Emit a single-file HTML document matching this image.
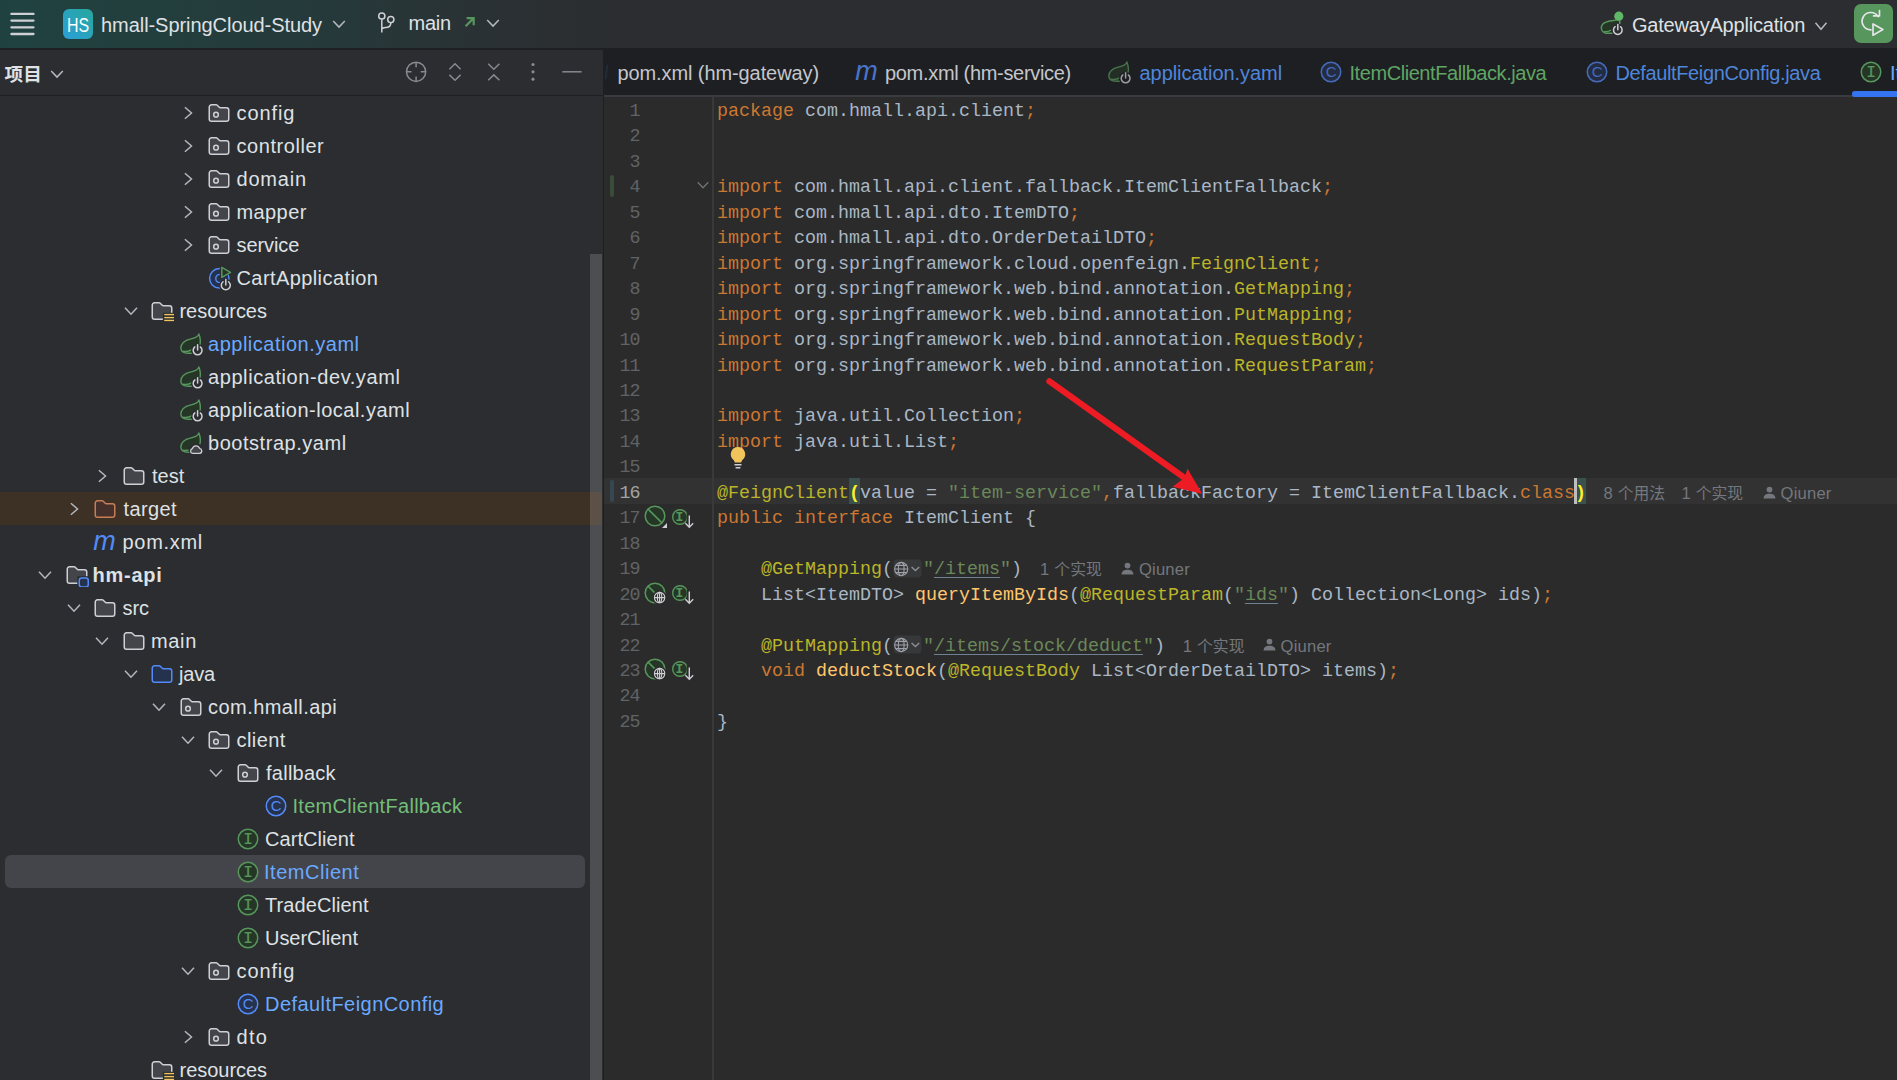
<!DOCTYPE html>
<html lang="zh-CN"><head><meta charset="utf-8"><title>hmall-SpringCloud-Study – ItemClient.java</title>
<style>
html,body{margin:0;padding:0;background:#2B2B2B;}
body{width:1897px;height:1080px;position:relative;overflow:hidden;font-family:"Liberation Sans","Noto Sans CJK SC",sans-serif;}
.tl{position:absolute;white-space:pre;font-size:20px;line-height:33px;height:33px;}
.ui{position:absolute;white-space:pre;font-size:20px;line-height:33px;color:#DFE1E5;}
.ln{position:absolute;left:604px;width:35.8px;text-align:right;font:18.33px/25.46px "Liberation Mono",monospace;white-space:pre;letter-spacing:-0.8px;}
.cl{position:absolute;left:717px;font:18.33px/25.46px "Liberation Mono",monospace;color:#A9B7C6;white-space:pre;height:25.46px;}
.k{color:#CC7832} .a{color:#BBB529} .s{color:#6A8759} .f{color:#FFC66D}
.u{text-decoration:underline;text-decoration-color:#6F8294;text-decoration-thickness:1.3px;text-underline-offset:3px}
.br{color:#FFEF28;font-weight:bold}
.gi{display:inline-block;position:relative;width:30px;height:1px;vertical-align:baseline;line-height:0}
.h{position:absolute;top:0.1px;font:16.6px/25.46px "Liberation Sans","Noto Sans CJK SC",sans-serif;color:#74777D;letter-spacing:0.2px;white-space:pre}
.cj{font-size:15.8px;letter-spacing:0}
.hi{position:absolute;top:4.8px}
</style></head>
<body>
<div style="position:absolute;left:0;top:0;width:1897px;height:47.5px;background:linear-gradient(90deg,#1F4240 0px,#223F3E 130px,#26393A 330px,#2A3134 480px,#2B2D30 620px)"></div>
<div style="position:absolute;left:0;top:47.5px;width:1897px;height:2.2px;background:#1E1F22"></div>
<svg style="position:absolute;left:8px;top:8px" width="30" height="32" viewBox="8 8 30 32" fill="none" stroke="#CED0D6" stroke-width="2.3" stroke-linecap="round"><path d="M11.4 13.9H33.5M11.4 20.6H33.5M11.4 27.3H33.5M11.4 34H33.5"/></svg>
<div style="position:absolute;left:63px;top:9px;width:30px;height:30px;border-radius:6px;background:linear-gradient(45deg,#2B9FD9,#27A79C)"></div>
<span style="position:absolute;left:63px;top:9.9px;width:30px;height:30px;line-height:30px;text-align:center;color:#fff;font:21px/30px 'Liberation Sans',sans-serif;transform:scaleX(0.76);transform-origin:50% 50%">HS</span>
<span class="ui" style="left:101.00px;top:9.3px;letter-spacing:-0.055px;">hmall-SpringCloud-Study</span>
<svg style="position:absolute;left:329px;top:14.3px" width="20" height="20" viewBox="-10 -10 20 20" fill="none"><path d="M-5.8 -3.1L0 3.1L5.8 -3.1" stroke="#B4B8BF" stroke-width="1.5"/></svg>
<svg style="position:absolute;left:372px;top:8px" width="28" height="30" viewBox="372 8 28 30" fill="none" stroke="#CED0D6" stroke-width="1.5"><circle cx="381.8" cy="16" r="3.1"/><circle cx="390.8" cy="19.6" r="3.1"/><path d="M381.8 19.2V32.6M390.8 22.8C390.8 26.4 388.5 27.6 385.6 27.6C383.3 27.6 381.8 28.4 381.8 30"/></svg>
<span class="ui" style="left:408.50px;top:7.4px;letter-spacing:-0.267px;">main</span>
<svg style="position:absolute;left:462px;top:14px" width="16" height="16" viewBox="462 14 16 16" fill="none" stroke="#57965C" stroke-width="2.2"><path d="M465.6 26.2L473.4 18.4M466.6 18.2H473.7V25.3"/></svg>
<svg style="position:absolute;left:483.4px;top:12.600000000000001px" width="20" height="20" viewBox="-10 -10 20 20" fill="none"><path d="M-5.8 -3.1L0 3.1L5.8 -3.1" stroke="#B4B8BF" stroke-width="1.5"/></svg>
<svg style="position:absolute;left:1598px;top:8px" width="30" height="32" viewBox="1598 8 30 32" fill="none"><path d="M1619.5 19.2C1616 21.2 1607 19.5 1602.6 24.2C1600 27.5 1601.4 32.4 1606 33.2H1612C1617 32 1621 26 1619.5 19.2Z" fill="#253627" stroke="#57965C" stroke-width="1.4"/><path d="M1603.6 31.6C1606 32 1609 31.4 1611 30" stroke="#57965C" stroke-width="1.4"/><g transform="translate(1599.2 11.7)"><circle cx="18.6" cy="18.4" r="6.4" fill="#2B2D30"/><path d="M21.25 15.01A4.3 4.3 0 1 1 15.95 15.01" stroke="#CED0D6" stroke-width="1.5" stroke-linecap="round"/><path d="M18.6 12.799999999999997V18.099999999999998" stroke="#CED0D6" stroke-width="1.5" stroke-linecap="round"/></g><circle cx="1618.8" cy="16.2" r="4.6" fill="#5FB865"/></svg>
<span class="ui" style="left:1632.00px;top:8.7px;letter-spacing:-0.206px;">GatewayApplication</span>
<svg style="position:absolute;left:1811.2px;top:15.5px" width="20" height="20" viewBox="-10 -10 20 20" fill="none"><path d="M-5.5 -3.3L0 3.3L5.5 -3.3" stroke="#B4B8BF" stroke-width="1.5"/></svg>
<div style="position:absolute;left:1854px;top:4.2px;width:39px;height:39px;border-radius:7px;background:#57965C"></div>
<svg style="position:absolute;left:1854px;top:4.2px" width="39" height="39" viewBox="0 0 39 39" fill="none" stroke="#E4E6EA" stroke-width="1.7" stroke-linecap="round" stroke-linejoin="round"><path d="M16.9 25.9A8.7 8.7 0 1 1 24.2 12.6"/><path d="M19.6 11.9H25.5V6.6"/><path d="M19 20V31.2L28.9 25.6Z"/></svg>
<div style="position:absolute;left:0;top:49.7px;width:603.2px;height:1031px;background:#2B2D30"></div>
<div style="position:absolute;left:0;top:95px;width:603px;height:1.2px;background:#1E1F22"></div>
<div style="position:absolute;left:603.1px;top:49.7px;width:1.1px;height:1031px;background:#1E1F22"></div>
<span style="position:absolute;left:4.6px;top:58.2px;font:bold 18.6px/33px 'Liberation Sans','Noto Sans CJK SC',sans-serif;color:#DFE1E5;white-space:pre">项目</span>
<svg style="position:absolute;left:47px;top:63.599999999999994px" width="20" height="20" viewBox="-10 -10 20 20" fill="none"><path d="M-5.8 -3.1L0 3.1L5.8 -3.1" stroke="#B4B8BF" stroke-width="1.5"/></svg>
<svg style="position:absolute;left:400px;top:56px" width="190" height="32" viewBox="400 56 190 32" fill="none" stroke="#868A91" stroke-width="1.5"><circle cx="416.1" cy="71.8" r="9.6"/><path d="M416.1 62.2V67.2M416.1 76.4V81.4M406.5 71.8H411.5M420.7 71.8H425.7"/><path d="M449.4 69.2L455 63.8L460.6 69.2M449.4 74.9L455 80.3L460.6 74.9"/><path d="M488.2 63.8L493.8 69.2L499.4 63.8M488.2 80.3L493.8 74.9L499.4 80.3"/><path d="M562.3 71.8H581.6"/><g fill="#868A91" stroke="none"><circle cx="533" cy="64.5" r="1.6"/><circle cx="533" cy="71.8" r="1.6"/><circle cx="533" cy="79.2" r="1.6"/></g></svg>
<svg style="position:absolute;left:179.5px;top:105.0px" width="16" height="16" viewBox="0 0 16 16" fill="none"><path d="M4.9 2.3L11.5 8L4.9 13.7" stroke="#B4B8BF" stroke-width="1.5" stroke-linejoin="miter"/></svg>
<svg style="position:absolute;left:207.0px;top:100.8px;" width="24" height="24" viewBox="0 0 16 16" fill="none"><path d="M1.5 4A1.5 1.5 0 0 1 3 2.5H6.1a1 1 0 0 1 .7.3L8.35 4.35a.5.5 0 0 0 .36.15H13A1.5 1.5 0 0 1 14.5 6v6A1.5 1.5 0 0 1 13 13.5H3A1.5 1.5 0 0 1 1.5 12Z" fill="#43454A" stroke="#CED0D6"/><circle cx="6" cy="9.1" r="1.55" stroke="#CED0D6"/></svg>
<span class="tl" style="left:236.50px;top:97px;letter-spacing:0.920px;color:#DFE1E5;font-weight:normal">config</span>
<svg style="position:absolute;left:179.5px;top:138.0px" width="16" height="16" viewBox="0 0 16 16" fill="none"><path d="M4.9 2.3L11.5 8L4.9 13.7" stroke="#B4B8BF" stroke-width="1.5" stroke-linejoin="miter"/></svg>
<svg style="position:absolute;left:207.0px;top:133.8px;" width="24" height="24" viewBox="0 0 16 16" fill="none"><path d="M1.5 4A1.5 1.5 0 0 1 3 2.5H6.1a1 1 0 0 1 .7.3L8.35 4.35a.5.5 0 0 0 .36.15H13A1.5 1.5 0 0 1 14.5 6v6A1.5 1.5 0 0 1 13 13.5H3A1.5 1.5 0 0 1 1.5 12Z" fill="#43454A" stroke="#CED0D6"/><circle cx="6" cy="9.1" r="1.55" stroke="#CED0D6"/></svg>
<span class="tl" style="left:236.50px;top:130px;letter-spacing:0.556px;color:#DFE1E5;font-weight:normal">controller</span>
<svg style="position:absolute;left:179.5px;top:171.0px" width="16" height="16" viewBox="0 0 16 16" fill="none"><path d="M4.9 2.3L11.5 8L4.9 13.7" stroke="#B4B8BF" stroke-width="1.5" stroke-linejoin="miter"/></svg>
<svg style="position:absolute;left:207.0px;top:166.8px;" width="24" height="24" viewBox="0 0 16 16" fill="none"><path d="M1.5 4A1.5 1.5 0 0 1 3 2.5H6.1a1 1 0 0 1 .7.3L8.35 4.35a.5.5 0 0 0 .36.15H13A1.5 1.5 0 0 1 14.5 6v6A1.5 1.5 0 0 1 13 13.5H3A1.5 1.5 0 0 1 1.5 12Z" fill="#43454A" stroke="#CED0D6"/><circle cx="6" cy="9.1" r="1.55" stroke="#CED0D6"/></svg>
<span class="tl" style="left:236.50px;top:163px;letter-spacing:0.800px;color:#DFE1E5;font-weight:normal">domain</span>
<svg style="position:absolute;left:179.5px;top:204.0px" width="16" height="16" viewBox="0 0 16 16" fill="none"><path d="M4.9 2.3L11.5 8L4.9 13.7" stroke="#B4B8BF" stroke-width="1.5" stroke-linejoin="miter"/></svg>
<svg style="position:absolute;left:207.0px;top:199.8px;" width="24" height="24" viewBox="0 0 16 16" fill="none"><path d="M1.5 4A1.5 1.5 0 0 1 3 2.5H6.1a1 1 0 0 1 .7.3L8.35 4.35a.5.5 0 0 0 .36.15H13A1.5 1.5 0 0 1 14.5 6v6A1.5 1.5 0 0 1 13 13.5H3A1.5 1.5 0 0 1 1.5 12Z" fill="#43454A" stroke="#CED0D6"/><circle cx="6" cy="9.1" r="1.55" stroke="#CED0D6"/></svg>
<span class="tl" style="left:236.50px;top:196px;letter-spacing:0.400px;color:#DFE1E5;font-weight:normal">mapper</span>
<svg style="position:absolute;left:179.5px;top:237.0px" width="16" height="16" viewBox="0 0 16 16" fill="none"><path d="M4.9 2.3L11.5 8L4.9 13.7" stroke="#B4B8BF" stroke-width="1.5" stroke-linejoin="miter"/></svg>
<svg style="position:absolute;left:207.0px;top:232.8px;" width="24" height="24" viewBox="0 0 16 16" fill="none"><path d="M1.5 4A1.5 1.5 0 0 1 3 2.5H6.1a1 1 0 0 1 .7.3L8.35 4.35a.5.5 0 0 0 .36.15H13A1.5 1.5 0 0 1 14.5 6v6A1.5 1.5 0 0 1 13 13.5H3A1.5 1.5 0 0 1 1.5 12Z" fill="#43454A" stroke="#CED0D6"/><circle cx="6" cy="9.1" r="1.55" stroke="#CED0D6"/></svg>
<span class="tl" style="left:236.50px;top:229px;letter-spacing:-0.100px;color:#DFE1E5;font-weight:normal">service</span>
<svg style="position:absolute;left:207.0px;top:265.8px;overflow:visible;" width="24" height="24" viewBox="0 0 24 24" fill="none"><circle cx="12.3" cy="12.3" r="9.7" fill="#25324D" stroke="#548AF7" stroke-width="1.5"/><text x="12.3" y="17" font-family="Liberation Sans, sans-serif" font-size="13.5" text-anchor="middle" fill="#548AF7">C</text><path d="M12.8 -2V13.5L26 6.3Z" fill="#2B2D30"/><path d="M14.8 1.4V11.4L23.5 6.4Z" fill="#253627" stroke="#57965C" stroke-width="1.5" stroke-linejoin="round"/><circle cx="18.8" cy="19.3" r="6.6" fill="#2B2D30"/><path d="M21.57 15.75A4.5 4.5 0 1 1 16.03 15.75" stroke="#CED0D6" stroke-width="1.5" stroke-linecap="round"/><path d="M18.8 13.5V19.0" stroke="#CED0D6" stroke-width="1.5" stroke-linecap="round"/></svg>
<span class="tl" style="left:236.50px;top:262px;letter-spacing:0.414px;color:#DFE1E5;font-weight:normal">CartApplication</span>
<svg style="position:absolute;left:120.5px;top:301.1px" width="20" height="20" viewBox="-10 -10 20 20" fill="none"><path d="M-6.0 -3.15L0 3.15L6.0 -3.15" stroke="#B4B8BF" stroke-width="1.5"/></svg>
<svg style="position:absolute;left:150.0px;top:298.8px;" width="24" height="24" viewBox="0 0 16 16" fill="none"><path d="M1.5 4A1.5 1.5 0 0 1 3 2.5H6.1a1 1 0 0 1 .7.3L8.35 4.35a.5.5 0 0 0 .36.15H13A1.5 1.5 0 0 1 14.5 6v6A1.5 1.5 0 0 1 13 13.5H3A1.5 1.5 0 0 1 1.5 12Z" fill="#43454A" stroke="#CED0D6"/><rect x="8.6" y="9.2" width="8" height="7" fill="#2B2D30"/><path d="M9.5 10.4H16.2" stroke="#F2C55C" stroke-width="0.9"/><path d="M9.5 12.4H16.2" stroke="#F2C55C" stroke-width="0.9"/><path d="M9.5 14.3H16.2" stroke="#F2C55C" stroke-width="0.9"/></svg>
<span class="tl" style="left:179.50px;top:295px;letter-spacing:-0.050px;color:#DFE1E5;font-weight:normal">resources</span>
<svg style="position:absolute;left:178.5px;top:331.8px;" width="24" height="24" viewBox="0 0 24 24" fill="none"><g opacity="1"><path d="M19.9 1.9C19.4 4.8 16.4 6 11.2 7.1C5.6 8.3 1.5 11.9 1.8 16.3C2.1 19.6 5 21.2 9.2 21.2H14.5C20.2 19.2 23.4 11 19.9 1.9Z" fill="#253627" stroke="#57965C" stroke-width="1.4" stroke-linejoin="round"/><path d="M4.6 19.3C7.5 19.8 10.5 19.2 13 17.6" stroke="#57965C" stroke-width="1.4" stroke-linecap="round"/><circle cx="18.6" cy="18.4" r="6.5" fill="#2B2D30"/><path d="M21.31 14.93A4.4 4.4 0 1 1 15.89 14.93" stroke="#CED0D6" stroke-width="1.5" stroke-linecap="round"/><path d="M18.6 12.699999999999998V18.099999999999998" stroke="#CED0D6" stroke-width="1.5" stroke-linecap="round"/></g></svg>
<span class="tl" style="left:208.00px;top:328px;letter-spacing:0.507px;color:#6AA9FF;font-weight:normal">application.yaml</span>
<svg style="position:absolute;left:178.5px;top:364.8px;" width="24" height="24" viewBox="0 0 24 24" fill="none"><g opacity="1"><path d="M19.9 1.9C19.4 4.8 16.4 6 11.2 7.1C5.6 8.3 1.5 11.9 1.8 16.3C2.1 19.6 5 21.2 9.2 21.2H14.5C20.2 19.2 23.4 11 19.9 1.9Z" fill="#253627" stroke="#57965C" stroke-width="1.4" stroke-linejoin="round"/><path d="M4.6 19.3C7.5 19.8 10.5 19.2 13 17.6" stroke="#57965C" stroke-width="1.4" stroke-linecap="round"/><circle cx="18.6" cy="18.4" r="6.5" fill="#2B2D30"/><path d="M21.31 14.93A4.4 4.4 0 1 1 15.89 14.93" stroke="#CED0D6" stroke-width="1.5" stroke-linecap="round"/><path d="M18.6 12.699999999999998V18.099999999999998" stroke="#CED0D6" stroke-width="1.5" stroke-linecap="round"/></g></svg>
<span class="tl" style="left:208.00px;top:361px;letter-spacing:0.579px;color:#DFE1E5;font-weight:normal">application-dev.yaml</span>
<svg style="position:absolute;left:178.5px;top:397.8px;" width="24" height="24" viewBox="0 0 24 24" fill="none"><g opacity="1"><path d="M19.9 1.9C19.4 4.8 16.4 6 11.2 7.1C5.6 8.3 1.5 11.9 1.8 16.3C2.1 19.6 5 21.2 9.2 21.2H14.5C20.2 19.2 23.4 11 19.9 1.9Z" fill="#253627" stroke="#57965C" stroke-width="1.4" stroke-linejoin="round"/><path d="M4.6 19.3C7.5 19.8 10.5 19.2 13 17.6" stroke="#57965C" stroke-width="1.4" stroke-linecap="round"/><circle cx="18.6" cy="18.4" r="6.5" fill="#2B2D30"/><path d="M21.31 14.93A4.4 4.4 0 1 1 15.89 14.93" stroke="#CED0D6" stroke-width="1.5" stroke-linecap="round"/><path d="M18.6 12.699999999999998V18.099999999999998" stroke="#CED0D6" stroke-width="1.5" stroke-linecap="round"/></g></svg>
<span class="tl" style="left:208.00px;top:394px;letter-spacing:0.495px;color:#DFE1E5;font-weight:normal">application-local.yaml</span>
<svg style="position:absolute;left:178.5px;top:430.8px;" width="24" height="24" viewBox="0 0 24 24" fill="none"><g opacity="1"><path d="M19.9 1.9C19.4 4.8 16.4 6 11.2 7.1C5.6 8.3 1.5 11.9 1.8 16.3C2.1 19.6 5 21.2 9.2 21.2H14.5C20.2 19.2 23.4 11 19.9 1.9Z" fill="#253627" stroke="#57965C" stroke-width="1.4" stroke-linejoin="round"/><path d="M4.6 19.3C7.5 19.8 10.5 19.2 13 17.6" stroke="#57965C" stroke-width="1.4" stroke-linecap="round"/><ellipse cx="17.5" cy="18.6" rx="8.2" ry="6" fill="#2B2D30"/><path d="M13.7 22.4a2.4 2.4 0 0 1-.3-4.7a3.7 3.7 0 0 1 7.1-.4a2.6 2.6 0 0 1 .3 5.1Z" fill="#43454A" stroke="#CED0D6" stroke-width="1.3" stroke-linejoin="round"/></g></svg>
<span class="tl" style="left:208.00px;top:427px;letter-spacing:0.538px;color:#DFE1E5;font-weight:normal">bootstrap.yaml</span>
<svg style="position:absolute;left:94.0px;top:468.0px" width="16" height="16" viewBox="0 0 16 16" fill="none"><path d="M4.9 2.3L11.5 8L4.9 13.7" stroke="#B4B8BF" stroke-width="1.5" stroke-linejoin="miter"/></svg>
<svg style="position:absolute;left:121.5px;top:463.8px;" width="24" height="24" viewBox="0 0 16 16" fill="none"><path d="M1.5 4A1.5 1.5 0 0 1 3 2.5H6.1a1 1 0 0 1 .7.3L8.35 4.35a.5.5 0 0 0 .36.15H13A1.5 1.5 0 0 1 14.5 6v6A1.5 1.5 0 0 1 13 13.5H3A1.5 1.5 0 0 1 1.5 12Z" fill="#43454A" stroke="#CED0D6"/></svg>
<span class="tl" style="left:152.00px;top:460px;letter-spacing:0.000px;color:#DFE1E5;font-weight:normal">test</span>
<div style="position:absolute;left:0;top:492px;width:602px;height:33px;background:#3D3024"></div>
<svg style="position:absolute;left:65.5px;top:501.0px" width="16" height="16" viewBox="0 0 16 16" fill="none"><path d="M4.9 2.3L11.5 8L4.9 13.7" stroke="#B4B8BF" stroke-width="1.5" stroke-linejoin="miter"/></svg>
<svg style="position:absolute;left:93.0px;top:496.8px;" width="24" height="24" viewBox="0 0 16 16" fill="none"><path d="M1.5 4A1.5 1.5 0 0 1 3 2.5H6.1a1 1 0 0 1 .7.3L8.35 4.35a.5.5 0 0 0 .36.15H13A1.5 1.5 0 0 1 14.5 6v6A1.5 1.5 0 0 1 13 13.5H3A1.5 1.5 0 0 1 1.5 12Z" fill="#45302B" stroke="#C77D55"/></svg>
<span class="tl" style="left:123.50px;top:493px;letter-spacing:0.400px;color:#DFE1E5;font-weight:normal">target</span>
<svg style="position:absolute;left:93.2px;top:530.6px;overflow:visible;" width="24" height="24" viewBox="0 0 24 24" fill="none"><text x="11.6" y="19.2" font-family="Liberation Sans, sans-serif" font-style="italic" font-size="27" text-anchor="middle" fill="#548AF7" opacity="1">m</text></svg>
<span class="tl" style="left:122.50px;top:526px;letter-spacing:0.700px;color:#DFE1E5;font-weight:normal">pom.xml</span>
<svg style="position:absolute;left:35.0px;top:565.1px" width="20" height="20" viewBox="-10 -10 20 20" fill="none"><path d="M-6.0 -3.15L0 3.15L6.0 -3.15" stroke="#B4B8BF" stroke-width="1.5"/></svg>
<svg style="position:absolute;left:64.5px;top:562.8px;" width="24" height="24" viewBox="0 0 16 16" fill="none"><path d="M1.5 4A1.5 1.5 0 0 1 3 2.5H6.1a1 1 0 0 1 .7.3L8.35 4.35a.5.5 0 0 0 .36.15H13A1.5 1.5 0 0 1 14.5 6v6A1.5 1.5 0 0 1 13 13.5H3A1.5 1.5 0 0 1 1.5 12Z" fill="#43454A" stroke="#CED0D6"/><rect x="8.2" y="8.8" width="8" height="8" fill="#2B2D30"/><rect x="9.5" y="10" width="6" height="6" rx="1.6" fill="#25324D" stroke="#548AF7"/></svg>
<span class="tl" style="left:92.50px;top:559px;letter-spacing:0.760px;color:#DFE1E5;font-weight:bold">hm-api</span>
<svg style="position:absolute;left:63.5px;top:598.1px" width="20" height="20" viewBox="-10 -10 20 20" fill="none"><path d="M-6.0 -3.15L0 3.15L6.0 -3.15" stroke="#B4B8BF" stroke-width="1.5"/></svg>
<svg style="position:absolute;left:93.0px;top:595.8px;" width="24" height="24" viewBox="0 0 16 16" fill="none"><path d="M1.5 4A1.5 1.5 0 0 1 3 2.5H6.1a1 1 0 0 1 .7.3L8.35 4.35a.5.5 0 0 0 .36.15H13A1.5 1.5 0 0 1 14.5 6v6A1.5 1.5 0 0 1 13 13.5H3A1.5 1.5 0 0 1 1.5 12Z" fill="#43454A" stroke="#CED0D6"/></svg>
<span class="tl" style="left:122.50px;top:592px;letter-spacing:-0.100px;color:#DFE1E5;font-weight:normal">src</span>
<svg style="position:absolute;left:92.0px;top:631.1px" width="20" height="20" viewBox="-10 -10 20 20" fill="none"><path d="M-6.0 -3.15L0 3.15L6.0 -3.15" stroke="#B4B8BF" stroke-width="1.5"/></svg>
<svg style="position:absolute;left:121.5px;top:628.8px;" width="24" height="24" viewBox="0 0 16 16" fill="none"><path d="M1.5 4A1.5 1.5 0 0 1 3 2.5H6.1a1 1 0 0 1 .7.3L8.35 4.35a.5.5 0 0 0 .36.15H13A1.5 1.5 0 0 1 14.5 6v6A1.5 1.5 0 0 1 13 13.5H3A1.5 1.5 0 0 1 1.5 12Z" fill="#43454A" stroke="#CED0D6"/></svg>
<span class="tl" style="left:151.00px;top:625px;letter-spacing:0.667px;color:#DFE1E5;font-weight:normal">main</span>
<svg style="position:absolute;left:120.5px;top:664.1px" width="20" height="20" viewBox="-10 -10 20 20" fill="none"><path d="M-6.0 -3.15L0 3.15L6.0 -3.15" stroke="#B4B8BF" stroke-width="1.5"/></svg>
<svg style="position:absolute;left:150.0px;top:661.8px;" width="24" height="24" viewBox="0 0 16 16" fill="none"><path d="M1.5 4A1.5 1.5 0 0 1 3 2.5H6.1a1 1 0 0 1 .7.3L8.35 4.35a.5.5 0 0 0 .36.15H13A1.5 1.5 0 0 1 14.5 6v6A1.5 1.5 0 0 1 13 13.5H3A1.5 1.5 0 0 1 1.5 12Z" fill="#25324D" stroke="#548AF7"/></svg>
<span class="tl" style="left:179.00px;top:658px;letter-spacing:-0.200px;color:#DFE1E5;font-weight:normal">java</span>
<svg style="position:absolute;left:149.0px;top:697.1px" width="20" height="20" viewBox="-10 -10 20 20" fill="none"><path d="M-6.0 -3.15L0 3.15L6.0 -3.15" stroke="#B4B8BF" stroke-width="1.5"/></svg>
<svg style="position:absolute;left:178.5px;top:694.8px;" width="24" height="24" viewBox="0 0 16 16" fill="none"><path d="M1.5 4A1.5 1.5 0 0 1 3 2.5H6.1a1 1 0 0 1 .7.3L8.35 4.35a.5.5 0 0 0 .36.15H13A1.5 1.5 0 0 1 14.5 6v6A1.5 1.5 0 0 1 13 13.5H3A1.5 1.5 0 0 1 1.5 12Z" fill="#43454A" stroke="#CED0D6"/><circle cx="6" cy="9.1" r="1.55" stroke="#CED0D6"/></svg>
<span class="tl" style="left:208.00px;top:691px;letter-spacing:0.450px;color:#DFE1E5;font-weight:normal">com.hmall.api</span>
<svg style="position:absolute;left:177.5px;top:730.1px" width="20" height="20" viewBox="-10 -10 20 20" fill="none"><path d="M-6.0 -3.15L0 3.15L6.0 -3.15" stroke="#B4B8BF" stroke-width="1.5"/></svg>
<svg style="position:absolute;left:207.0px;top:727.8px;" width="24" height="24" viewBox="0 0 16 16" fill="none"><path d="M1.5 4A1.5 1.5 0 0 1 3 2.5H6.1a1 1 0 0 1 .7.3L8.35 4.35a.5.5 0 0 0 .36.15H13A1.5 1.5 0 0 1 14.5 6v6A1.5 1.5 0 0 1 13 13.5H3A1.5 1.5 0 0 1 1.5 12Z" fill="#43454A" stroke="#CED0D6"/><circle cx="6" cy="9.1" r="1.55" stroke="#CED0D6"/></svg>
<span class="tl" style="left:236.50px;top:724px;letter-spacing:0.440px;color:#DFE1E5;font-weight:normal">client</span>
<svg style="position:absolute;left:206.0px;top:763.1px" width="20" height="20" viewBox="-10 -10 20 20" fill="none"><path d="M-6.0 -3.15L0 3.15L6.0 -3.15" stroke="#B4B8BF" stroke-width="1.5"/></svg>
<svg style="position:absolute;left:235.5px;top:760.8px;" width="24" height="24" viewBox="0 0 16 16" fill="none"><path d="M1.5 4A1.5 1.5 0 0 1 3 2.5H6.1a1 1 0 0 1 .7.3L8.35 4.35a.5.5 0 0 0 .36.15H13A1.5 1.5 0 0 1 14.5 6v6A1.5 1.5 0 0 1 13 13.5H3A1.5 1.5 0 0 1 1.5 12Z" fill="#43454A" stroke="#CED0D6"/><circle cx="6" cy="9.1" r="1.55" stroke="#CED0D6"/></svg>
<span class="tl" style="left:266.00px;top:757px;letter-spacing:0.257px;color:#DFE1E5;font-weight:normal">fallback</span>
<svg style="position:absolute;left:264.0px;top:793.8px;" width="24" height="24" viewBox="0 0 16 16" fill="none"><g opacity="1"><circle cx="8" cy="8" r="6.5" fill="#25324D" stroke="#548AF7"/><text x="8.05" y="11.55" font-family="Liberation Sans, sans-serif" font-size="10" text-anchor="middle" fill="#548AF7">C</text></g></svg>
<span class="tl" style="left:292.50px;top:790px;letter-spacing:0.294px;color:#73BD79;font-weight:normal">ItemClientFallback</span>
<svg style="position:absolute;left:235.5px;top:826.8px;" width="24" height="24" viewBox="0 0 16 16" fill="none"><g opacity="1"><circle cx="8" cy="8" r="6.5" fill="#253627" stroke="#57965C"/><text x="8" y="11.45" font-family="Liberation Mono, monospace" font-size="10.8" text-anchor="middle" fill="#57965C" stroke="#57965C" stroke-width="0.15">I</text></g></svg>
<span class="tl" style="left:265.00px;top:823px;letter-spacing:0.067px;color:#DFE1E5;font-weight:normal">CartClient</span>
<div style="position:absolute;left:4.5px;top:854.8px;width:580.5px;height:33px;background:#43454A;border-radius:6px"></div>
<svg style="position:absolute;left:235.5px;top:859.8px;" width="24" height="24" viewBox="0 0 16 16" fill="none"><g opacity="1"><circle cx="8" cy="8" r="6.5" fill="#253627" stroke="#57965C"/><text x="8" y="11.45" font-family="Liberation Mono, monospace" font-size="10.8" text-anchor="middle" fill="#57965C" stroke="#57965C" stroke-width="0.15">I</text></g></svg>
<span class="tl" style="left:264.00px;top:856px;letter-spacing:0.533px;color:#6AA9FF;font-weight:normal">ItemClient</span>
<svg style="position:absolute;left:235.5px;top:892.8px;" width="24" height="24" viewBox="0 0 16 16" fill="none"><g opacity="1"><circle cx="8" cy="8" r="6.5" fill="#253627" stroke="#57965C"/><text x="8" y="11.45" font-family="Liberation Mono, monospace" font-size="10.8" text-anchor="middle" fill="#57965C" stroke="#57965C" stroke-width="0.15">I</text></g></svg>
<span class="tl" style="left:265.00px;top:889px;letter-spacing:0.080px;color:#DFE1E5;font-weight:normal">TradeClient</span>
<svg style="position:absolute;left:235.5px;top:925.8px;" width="24" height="24" viewBox="0 0 16 16" fill="none"><g opacity="1"><circle cx="8" cy="8" r="6.5" fill="#253627" stroke="#57965C"/><text x="8" y="11.45" font-family="Liberation Mono, monospace" font-size="10.8" text-anchor="middle" fill="#57965C" stroke="#57965C" stroke-width="0.15">I</text></g></svg>
<span class="tl" style="left:265.00px;top:922px;letter-spacing:-0.044px;color:#DFE1E5;font-weight:normal">UserClient</span>
<svg style="position:absolute;left:177.5px;top:961.1px" width="20" height="20" viewBox="-10 -10 20 20" fill="none"><path d="M-6.0 -3.15L0 3.15L6.0 -3.15" stroke="#B4B8BF" stroke-width="1.5"/></svg>
<svg style="position:absolute;left:207.0px;top:958.8px;" width="24" height="24" viewBox="0 0 16 16" fill="none"><path d="M1.5 4A1.5 1.5 0 0 1 3 2.5H6.1a1 1 0 0 1 .7.3L8.35 4.35a.5.5 0 0 0 .36.15H13A1.5 1.5 0 0 1 14.5 6v6A1.5 1.5 0 0 1 13 13.5H3A1.5 1.5 0 0 1 1.5 12Z" fill="#43454A" stroke="#CED0D6"/><circle cx="6" cy="9.1" r="1.55" stroke="#CED0D6"/></svg>
<span class="tl" style="left:236.50px;top:955px;letter-spacing:0.880px;color:#DFE1E5;font-weight:normal">config</span>
<svg style="position:absolute;left:235.5px;top:991.8px;" width="24" height="24" viewBox="0 0 16 16" fill="none"><g opacity="1"><circle cx="8" cy="8" r="6.5" fill="#25324D" stroke="#548AF7"/><text x="8.05" y="11.55" font-family="Liberation Sans, sans-serif" font-size="10" text-anchor="middle" fill="#548AF7">C</text></g></svg>
<span class="tl" style="left:265.00px;top:988px;letter-spacing:0.441px;color:#6AA9FF;font-weight:normal">DefaultFeignConfig</span>
<svg style="position:absolute;left:179.5px;top:1029.0px" width="16" height="16" viewBox="0 0 16 16" fill="none"><path d="M4.9 2.3L11.5 8L4.9 13.7" stroke="#B4B8BF" stroke-width="1.5" stroke-linejoin="miter"/></svg>
<svg style="position:absolute;left:207.0px;top:1024.8px;" width="24" height="24" viewBox="0 0 16 16" fill="none"><path d="M1.5 4A1.5 1.5 0 0 1 3 2.5H6.1a1 1 0 0 1 .7.3L8.35 4.35a.5.5 0 0 0 .36.15H13A1.5 1.5 0 0 1 14.5 6v6A1.5 1.5 0 0 1 13 13.5H3A1.5 1.5 0 0 1 1.5 12Z" fill="#43454A" stroke="#CED0D6"/><circle cx="6" cy="9.1" r="1.55" stroke="#CED0D6"/></svg>
<span class="tl" style="left:236.50px;top:1021px;letter-spacing:1.300px;color:#DFE1E5;font-weight:normal">dto</span>
<svg style="position:absolute;left:150.0px;top:1057.8px;" width="24" height="24" viewBox="0 0 16 16" fill="none"><path d="M1.5 4A1.5 1.5 0 0 1 3 2.5H6.1a1 1 0 0 1 .7.3L8.35 4.35a.5.5 0 0 0 .36.15H13A1.5 1.5 0 0 1 14.5 6v6A1.5 1.5 0 0 1 13 13.5H3A1.5 1.5 0 0 1 1.5 12Z" fill="#43454A" stroke="#CED0D6"/><rect x="8.6" y="9.2" width="8" height="7" fill="#2B2D30"/><path d="M9.5 10.4H16.2" stroke="#F2C55C" stroke-width="0.9"/><path d="M9.5 12.4H16.2" stroke="#F2C55C" stroke-width="0.9"/><path d="M9.5 14.3H16.2" stroke="#F2C55C" stroke-width="0.9"/></svg>
<span class="tl" style="left:179.50px;top:1054px;letter-spacing:-0.025px;color:#DFE1E5;font-weight:normal">resources</span>
<div style="position:absolute;left:604.2px;top:49.7px;width:1293px;height:45.5px;background:#1E1F22"></div>
<div style="position:absolute;left:604.2px;top:95px;width:1293px;height:2px;background:#393B40"></div>
<div style="position:absolute;left:1852.4px;top:91.2px;width:60px;height:5.6px;border-radius:2.8px;background:#3574F0"></div>
<svg style="position:absolute;left:603px;top:62px" width="8" height="20" viewBox="0 0 8 20" fill="none"><path d="M4.4 3.5L2.6 16.5" stroke="#232C3B" stroke-width="1.8" stroke-linecap="round"/></svg>
<span class="ui tab" style="left:617.50px;top:57.1px;letter-spacing:-0.095px;color:#C4C6CC">pom.xml (hm-gateway)</span>
<svg style="position:absolute;left:854.5px;top:61px;overflow:visible;" width="24" height="24" viewBox="0 0 24 24" fill="none"><text x="11.6" y="19.2" font-family="Liberation Sans, sans-serif" font-style="italic" font-size="27" text-anchor="middle" fill="#548AF7" opacity="0.8">m</text></svg>
<span class="ui tab" style="left:885.00px;top:57.1px;letter-spacing:-0.316px;color:#C4C6CC">pom.xml (hm-service)</span>
<svg style="position:absolute;left:1107.3px;top:59.6px;" width="24" height="24" viewBox="0 0 24 24" fill="none"><g opacity="0.72"><path d="M19.9 1.9C19.4 4.8 16.4 6 11.2 7.1C5.6 8.3 1.5 11.9 1.8 16.3C2.1 19.6 5 21.2 9.2 21.2H14.5C20.2 19.2 23.4 11 19.9 1.9Z" fill="#253627" stroke="#57965C" stroke-width="1.4" stroke-linejoin="round"/><path d="M4.6 19.3C7.5 19.8 10.5 19.2 13 17.6" stroke="#57965C" stroke-width="1.4" stroke-linecap="round"/><circle cx="18.6" cy="18.4" r="6.5" fill="#1E1F22"/><path d="M21.31 14.93A4.4 4.4 0 1 1 15.89 14.93" stroke="#CED0D6" stroke-width="1.5" stroke-linecap="round"/><path d="M18.6 12.699999999999998V18.099999999999998" stroke="#CED0D6" stroke-width="1.5" stroke-linecap="round"/></g></svg>
<span class="ui tab" style="left:1139.50px;top:57.1px;letter-spacing:-0.053px;color:#4E86DC">application.yaml</span>
<svg style="position:absolute;left:1319.3px;top:59.6px;" width="24" height="24" viewBox="0 0 16 16" fill="none"><g opacity="0.72"><circle cx="8" cy="8" r="6.5" fill="#25324D" stroke="#548AF7"/><text x="8.05" y="11.55" font-family="Liberation Sans, sans-serif" font-size="10" text-anchor="middle" fill="#548AF7">C</text></g></svg>
<span class="ui tab" style="left:1349.50px;top:57.1px;letter-spacing:-0.436px;color:#5FA564">ItemClientFallback.java</span>
<svg style="position:absolute;left:1584.5px;top:60px;" width="24" height="24" viewBox="0 0 16 16" fill="none"><g opacity="0.72"><circle cx="8" cy="8" r="6.5" fill="#25324D" stroke="#548AF7"/><text x="8.05" y="11.55" font-family="Liberation Sans, sans-serif" font-size="10" text-anchor="middle" fill="#548AF7">C</text></g></svg>
<span class="ui tab" style="left:1615.50px;top:57.1px;letter-spacing:-0.373px;color:#4E86DC">DefaultFeignConfig.java</span>
<svg style="position:absolute;left:1858.7px;top:60px;" width="24" height="24" viewBox="0 0 16 16" fill="none"><g opacity="1"><circle cx="8" cy="8" r="6.5" fill="#253627" stroke="#57965C"/><text x="8" y="11.45" font-family="Liberation Mono, monospace" font-size="10.8" text-anchor="middle" fill="#57965C" stroke="#57965C" stroke-width="0.15">I</text></g></svg>
<span class="ui tab" style="left:1890px;top:57.1px;color:#6AA9FF">ItemClient.java</span>
<div style="position:absolute;left:604px;top:478px;width:1293px;height:26px;background:#323232"></div>
<div style="position:absolute;left:712.1px;top:97px;width:1.9px;height:983px;background:#393939"></div>
<div style="position:absolute;left:849px;top:478px;width:11px;height:26px;background:#3B514D"></div>
<div style="position:absolute;left:1575px;top:478px;width:11px;height:26px;background:#3B514D"></div>
<span class="ln" style="top:98.90px;color:#606366">1</span>
<div class="cl" style="top:98.90px"><span class="k">package</span> com.hmall.api.client<span class="k">;</span></div>
<span class="ln" style="top:124.36px;color:#606366">2</span>
<span class="ln" style="top:149.82px;color:#606366">3</span>
<span class="ln" style="top:175.28px;color:#606366">4</span>
<div class="cl" style="top:175.28px"><span class="k">import</span> com.hmall.api.client.fallback.ItemClientFallback<span class="k">;</span></div>
<span class="ln" style="top:200.74px;color:#606366">5</span>
<div class="cl" style="top:200.74px"><span class="k">import</span> com.hmall.api.dto.ItemDTO<span class="k">;</span></div>
<span class="ln" style="top:226.20px;color:#606366">6</span>
<div class="cl" style="top:226.20px"><span class="k">import</span> com.hmall.api.dto.OrderDetailDTO<span class="k">;</span></div>
<span class="ln" style="top:251.66px;color:#606366">7</span>
<div class="cl" style="top:251.66px"><span class="k">import</span> org.springframework.cloud.openfeign.<span class="a">FeignClient</span><span class="k">;</span></div>
<span class="ln" style="top:277.12px;color:#606366">8</span>
<div class="cl" style="top:277.12px"><span class="k">import</span> org.springframework.web.bind.annotation.<span class="a">GetMapping</span><span class="k">;</span></div>
<span class="ln" style="top:302.58px;color:#606366">9</span>
<div class="cl" style="top:302.58px"><span class="k">import</span> org.springframework.web.bind.annotation.<span class="a">PutMapping</span><span class="k">;</span></div>
<span class="ln" style="top:328.04px;color:#606366">10</span>
<div class="cl" style="top:328.04px"><span class="k">import</span> org.springframework.web.bind.annotation.<span class="a">RequestBody</span><span class="k">;</span></div>
<span class="ln" style="top:353.50px;color:#606366">11</span>
<div class="cl" style="top:353.50px"><span class="k">import</span> org.springframework.web.bind.annotation.<span class="a">RequestParam</span><span class="k">;</span></div>
<span class="ln" style="top:378.96px;color:#606366">12</span>
<span class="ln" style="top:404.42px;color:#606366">13</span>
<div class="cl" style="top:404.42px"><span class="k">import</span> java.util.Collection<span class="k">;</span></div>
<span class="ln" style="top:429.88px;color:#606366">14</span>
<div class="cl" style="top:429.88px"><span class="k">import</span> java.util.List<span class="k">;</span></div>
<span class="ln" style="top:455.34px;color:#606366">15</span>
<span class="ln" style="top:480.80px;color:#A4A3A3">16</span>
<div class="cl" style="top:480.80px"><span class="a">@FeignClient</span><span class="br">(</span>value = <span class="s">"item-service"</span><span class="k">,</span>fallbackFactory = ItemClientFallback.<span class="k">class</span><span class="br">)</span><span class="h" style="left:886.4px">8 <span class="cj">个用法</span></span><span class="h" style="left:964.4px">1 <span class="cj">个实现</span></span><svg class="hi" style="left:1045.6px" width="13" height="13" viewBox="0 0 13 13"><circle cx="6.5" cy="3.6" r="2.9" fill="#74777D"/><path d="M0.6 12.6C0.6 9 3.2 7.8 6.5 7.8S12.4 9 12.4 12.6Z" fill="#74777D"/></svg><span class="h" style="left:1063.6px">Qiuner</span></div>
<span class="ln" style="top:506.26px;color:#606366">17</span>
<div class="cl" style="top:506.26px"><span class="k">public interface</span> ItemClient {</div>
<span class="ln" style="top:531.72px;color:#606366">18</span>
<span class="ln" style="top:557.18px;color:#606366">19</span>
<div class="cl" style="top:557.18px">    <span class="a">@GetMapping</span>(<span class="gi"><svg width="30" height="22" viewBox="0 0 30 22" fill="none" style="position:absolute;left:0;top:-15.6px"><rect x="0.5" y="1.6" width="28" height="18" rx="4" fill="#37383A"/><g stroke="#9DA0A8" stroke-width="1.1"><circle cx="8.2" cy="11" r="6.6"/><ellipse cx="8.2" cy="11" rx="2.9" ry="6.6"/><path d="M1.6 11H14.8M2.6 7.4H13.8M2.6 14.6H13.8"/></g><path d="M18.6 9L22.4 12.6L26.2 9" stroke="#8C8F96" stroke-width="1.4"/></svg></span><span class="s">"<span class="u">/items</span>"</span>)<span class="h" style="left:323.1px">1 <span class="cj">个实现</span></span><svg class="hi" style="left:403.9px" width="13" height="13" viewBox="0 0 13 13"><circle cx="6.5" cy="3.6" r="2.9" fill="#74777D"/><path d="M0.6 12.6C0.6 9 3.2 7.8 6.5 7.8S12.4 9 12.4 12.6Z" fill="#74777D"/></svg><span class="h" style="left:421.9px">Qiuner</span></div>
<span class="ln" style="top:582.64px;color:#606366">20</span>
<div class="cl" style="top:582.64px">    List&lt;ItemDTO&gt; <span class="f">queryItemByIds</span>(<span class="a">@RequestParam</span>(<span class="s">"<span class="u">ids</span>"</span>) Collection&lt;Long&gt; ids)<span class="k">;</span></div>
<span class="ln" style="top:608.10px;color:#606366">21</span>
<span class="ln" style="top:633.56px;color:#606366">22</span>
<div class="cl" style="top:633.56px">    <span class="a">@PutMapping</span>(<span class="gi"><svg width="30" height="22" viewBox="0 0 30 22" fill="none" style="position:absolute;left:0;top:-15.6px"><rect x="0.5" y="1.6" width="28" height="18" rx="4" fill="#37383A"/><g stroke="#9DA0A8" stroke-width="1.1"><circle cx="8.2" cy="11" r="6.6"/><ellipse cx="8.2" cy="11" rx="2.9" ry="6.6"/><path d="M1.6 11H14.8M2.6 7.4H13.8M2.6 14.6H13.8"/></g><path d="M18.6 9L22.4 12.6L26.2 9" stroke="#8C8F96" stroke-width="1.4"/></svg></span><span class="s">"<span class="u">/items/stock/deduct</span>"</span>)<span class="h" style="left:465.8px">1 <span class="cj">个实现</span></span><svg class="hi" style="left:545.9px" width="13" height="13" viewBox="0 0 13 13"><circle cx="6.5" cy="3.6" r="2.9" fill="#74777D"/><path d="M0.6 12.6C0.6 9 3.2 7.8 6.5 7.8S12.4 9 12.4 12.6Z" fill="#74777D"/></svg><span class="h" style="left:563.6px">Qiuner</span></div>
<span class="ln" style="top:659.02px;color:#606366">23</span>
<div class="cl" style="top:659.02px">    <span class="k">void</span> <span class="f">deductStock</span>(<span class="a">@RequestBody</span> List&lt;OrderDetailDTO&gt; items)<span class="k">;</span></div>
<span class="ln" style="top:684.48px;color:#606366">24</span>
<span class="ln" style="top:709.94px;color:#606366">25</span>
<div class="cl" style="top:709.94px">}</div>
<svg style="position:absolute;left:641.9px;top:503.36px" width="30" height="30" viewBox="-13 -13 30 30" fill="none"><circle cx="0" cy="0" r="9.8" fill="#253627" stroke="#57965C" stroke-width="1.5"/><path d="M-6.9 -6.9L6.9 6.9" stroke="#57965C" stroke-width="1.5"/><path d="M12 7V12H7Z" fill="#CED0D6"/></svg>
<svg style="position:absolute;left:669.9px;top:506.56000000000006px" width="24" height="24" viewBox="-10 -10 24 24" fill="none"><circle cx="0" cy="0" r="7.3" fill="#253627" stroke="#57965C" stroke-width="1.4"/><text x="-0.6" y="4.2" font-family="Liberation Mono, monospace" font-weight="bold" font-size="13" text-anchor="middle" fill="#57965C">I</text><path d="M6.6 -3.5H13.5V13H6.6Z" fill="#2B2B2B"/><path d="M9.3 -1.5V10M5.4 6.3L9.3 10.2L13.2 6.3" stroke="#CED0D6" stroke-width="1.4"/></svg>
<svg style="position:absolute;left:641.9px;top:579.74px" width="30" height="30" viewBox="-13 -13 30 30" fill="none"><circle cx="0" cy="0" r="9.8" fill="#253627" stroke="#57965C" stroke-width="1.5"/><path d="M-6.9 -6.9L6.9 6.9" stroke="#57965C" stroke-width="1.5"/><circle cx="4.6" cy="4.6" r="7.2" fill="#2B2B2B"/><g stroke="#CED0D6" stroke-width="1.1"><circle cx="4.6" cy="4.6" r="5.2"/><ellipse cx="4.6" cy="4.6" rx="2.2" ry="5.2"/><path d="M-0.6 4.6H9.8M4.6 -0.6V9.8"/></g></svg>
<svg style="position:absolute;left:669.9px;top:582.94px" width="24" height="24" viewBox="-10 -10 24 24" fill="none"><circle cx="0" cy="0" r="7.3" fill="#253627" stroke="#57965C" stroke-width="1.4"/><text x="-0.6" y="4.2" font-family="Liberation Mono, monospace" font-weight="bold" font-size="13" text-anchor="middle" fill="#57965C">I</text><path d="M6.6 -3.5H13.5V13H6.6Z" fill="#2B2B2B"/><path d="M9.3 -1.5V10M5.4 6.3L9.3 10.2L13.2 6.3" stroke="#CED0D6" stroke-width="1.4"/></svg>
<svg style="position:absolute;left:641.9px;top:656.12px" width="30" height="30" viewBox="-13 -13 30 30" fill="none"><circle cx="0" cy="0" r="9.8" fill="#253627" stroke="#57965C" stroke-width="1.5"/><path d="M-6.9 -6.9L6.9 6.9" stroke="#57965C" stroke-width="1.5"/><circle cx="4.6" cy="4.6" r="7.2" fill="#2B2B2B"/><g stroke="#CED0D6" stroke-width="1.1"><circle cx="4.6" cy="4.6" r="5.2"/><ellipse cx="4.6" cy="4.6" rx="2.2" ry="5.2"/><path d="M-0.6 4.6H9.8M4.6 -0.6V9.8"/></g></svg>
<svg style="position:absolute;left:669.9px;top:659.32px" width="24" height="24" viewBox="-10 -10 24 24" fill="none"><circle cx="0" cy="0" r="7.3" fill="#253627" stroke="#57965C" stroke-width="1.4"/><text x="-0.6" y="4.2" font-family="Liberation Mono, monospace" font-weight="bold" font-size="13" text-anchor="middle" fill="#57965C">I</text><path d="M6.6 -3.5H13.5V13H6.6Z" fill="#2B2B2B"/><path d="M9.3 -1.5V10M5.4 6.3L9.3 10.2L13.2 6.3" stroke="#CED0D6" stroke-width="1.4"/></svg>
<div style="position:absolute;left:609.7px;top:175px;width:4px;height:22px;border-radius:2px;background:#384C38"></div>
<div style="position:absolute;left:609.7px;top:480.3px;width:4px;height:22px;border-radius:2px;background:#374752"></div>
<svg style="position:absolute;left:692.5px;top:175.3px" width="20" height="20" viewBox="-10 -10 20 20" fill="none"><path d="M-5.25 -2.7L0 2.7L5.25 -2.7" stroke="#6E7176" stroke-width="1.4"/></svg>
<svg style="position:absolute;left:728px;top:445px" width="20" height="26" viewBox="0 0 20 26" fill="none"><path d="M10 2A7.2 7.2 0 0 0 5.6 14.9C6.3 15.6 6.7 16.6 6.7 17.6H13.3C13.3 16.6 13.7 15.6 14.4 14.9A7.2 7.2 0 0 0 10 2Z" fill="#F2C55C"/><path d="M6.5 19.8H13.5M7.6 22.8H12.4" stroke="#CED0D6" stroke-width="1.5"/></svg>
<div style="position:absolute;left:1573.9px;top:478.2px;width:3px;height:25.8px;background:#BDBDBD"></div>
<svg style="position:absolute;left:1030px;top:365px" width="200" height="140" viewBox="1030 365 200 140"><path d="M1049.4 381.2L1184 477.6" stroke="#ED1C24" stroke-width="6.2" stroke-linecap="round"/><path d="M1202.4 494L1172.6 486.8L1184.4 477.9L1187.5 468.7Z" fill="#ED1C24"/></svg>
<div style="position:absolute;left:590px;top:254px;width:12.2px;height:830px;background:rgba(255,255,255,0.16)"></div>
</body></html>
